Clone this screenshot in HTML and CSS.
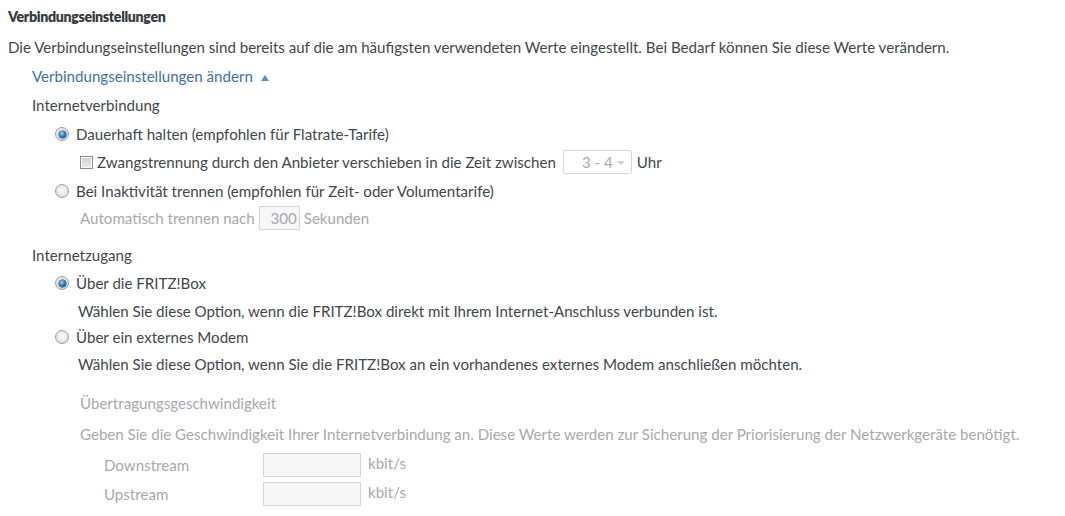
FILE: index.html
```html
<!DOCTYPE html>
<html lang="de">
<head>
<meta charset="utf-8">
<title>Verbindungseinstellungen</title>
<link rel="stylesheet" href="styles.css">
</head>
<body>
<div class="page">
  <h2 class="title">Verbindungseinstellungen</h2>
  <p class="intro">Die Verbindungseinstellungen sind bereits auf die am häufigsten verwendeten Werte eingestellt. Bei Bedarf können Sie diese Werte verändern.</p>
  <div class="link-row"><a class="link">Verbindungseinstellungen ändern</a><span class="tri"></span></div>

  <div class="section">
    <div class="sec-title r-inet">Internetverbindung</div>
    <div class="opt r-opt1"><span class="radio checked"></span><span>Dauerhaft halten (empfohlen für Flatrate-Tarife)</span></div>
    <div class="sub r-check"><span class="checkbox"></span><span>Zwangstrennung durch den Anbieter verschieben in die Zeit zwischen</span><span class="select">3 - 4<span class="caret"></span></span><span>Uhr</span></div>
    <div class="opt r-opt2"><span class="radio"></span><span>Bei Inaktivität trennen (empfohlen für Zeit- oder Volumentarife)</span></div>
    <div class="sub dis r-auto"><span>Automatisch trennen nach</span><span class="num">300</span><span>Sekunden</span></div>

    <div class="sec-title r-zug">Internetzugang</div>
    <div class="opt r-opt3"><span class="radio checked"></span><span>Über die FRITZ!Box</span></div>
    <div class="hint r-h1">Wählen Sie diese Option, wenn die FRITZ!Box direkt mit Ihrem Internet-Anschluss verbunden ist.</div>
    <div class="opt r-opt4"><span class="radio"></span><span>Über ein externes Modem</span></div>
    <div class="hint r-h2">Wählen Sie diese Option, wenn Sie die FRITZ!Box an ein vorhandenes externes Modem anschließen möchten.</div>

    <div class="speed dis">
      <div class="sp-title">Übertragungsgeschwindigkeit</div>
      <div class="sp-text">Geben Sie die Geschwindigkeit Ihrer Internetverbindung an. Diese Werte werden zur Sicherung der Priorisierung der Netzwerkgeräte benötigt.</div>
      <div class="sp-row"><span class="sp-label">Downstream</span><span class="box"></span><span class="unit">kbit/s</span></div>
      <div class="sp-row"><span class="sp-label">Upstream</span><span class="box"></span><span class="unit">kbit/s</span></div>
    </div>
  </div>
</div>
</body>
</html>
```

FILE: styles.css
```css
* { box-sizing: border-box; }
html, body { margin: 0; padding: 0; background: #fff; }
body {
  font-family: "Lato", "Open Sans", sans-serif;
  font-size: 15.1px;
  color: #3f464c;
}
.page { padding: 0 8px; }
.title {
  margin: 0;
  height: 32px;
  display: flex;
  align-items: center;
  font-size: 14.2px;
  letter-spacing: -0.35px;
  font-weight: 800;
  color: #353b40;
}
.intro {
  margin: 0;
  height: 30px;
  display: flex;
  align-items: center;
}
.link-row {
  height: 28px;
  display: flex;
  align-items: center;
  padding-left: 24px;
  gap: 8px;
}
.link { color: #3e6fa8; }
.tri {
  width: 0; height: 0;
  border-left: 4px solid transparent;
  border-right: 4px solid transparent;
  border-bottom: 6px solid #5a8fc8;
  margin-top: 4px;
}
.section { padding-left: 24px; }
.sec-title { display: flex; align-items: center; }
.r-inet { height: 30px; }
.opt { display: flex; align-items: center; gap: 7px; padding-left: 23px; }
.r-opt1 { height: 28px; }
.sub { display: flex; align-items: center; padding-left: 48px; }
.r-check { height: 28px; gap: 5px; }
.r-check .checkbox { margin-right: -1px; }
.r-opt2 { height: 30px; }
.r-auto { height: 24px; gap: 4px; }
.r-zug { height: 40px; padding-top: 10px; }
.r-opt3 { height: 26px; }
.hint { display: flex; align-items: center; padding-left: 46px; }
.r-h1 { height: 30px; }
.r-opt4 { height: 22px; }
.r-h2 { height: 32px; }

.radio {
  width: 14px; height: 14px;
  border-radius: 50%;
  border: 1px solid #a0a0a0;
  background: radial-gradient(circle at 50% 45%, #fbfbfb 0%, #ececec 45%, #c8c8c8 100%);
  position: relative;
  flex: none;
}
.radio.checked::after {
  content: "";
  position: absolute;
  left: 2.5px; top: 2.5px;
  width: 7px; height: 7px;
  border-radius: 50%;
  background: radial-gradient(circle at 40% 35%, #9fd8ff 0%, #2a80c8 45%, #0b3566 100%);
  box-shadow: 0 0 0 0.5px #17324f;
}
.checkbox {
  width: 13px; height: 13px;
  border: 1px solid #8d8d8d;
  background: linear-gradient(#cfcfcf, #ececec);
  box-shadow: inset 0 0 0 1px #fafafa;
  flex: none;
}
.select {
  margin-left: 2px;
  width: 69px; height: 24px;
  border: 1px solid #d6d6d6;
  border-radius: 2px;
  color: #a8a8a8;
  display: flex;
  align-items: center;
  justify-content: flex-end;
  padding-right: 18px;
  position: relative;
}
.caret {
  position: absolute;
  right: 6px; top: 10px;
  width: 0; height: 0;
  border-left: 4px solid transparent;
  border-right: 4px solid transparent;
  border-top: 4px solid #cfcfcf;
}
.dis { color: #a6a9ac; }
.num {
  width: 41px; height: 24px;
  border: 1px solid #d6d6d6;
  background: #f7f7f7;
  display: flex;
  align-items: center;
  justify-content: flex-end;
  padding-right: 2px;
  color: #a6a9ac;
}
.speed { padding-left: 48px; padding-top: 8px; }
.sp-title { height: 30px; display: flex; align-items: center; }
.sp-text { height: 32px; display: flex; align-items: center; }
.sp-row { display: flex; align-items: center; height: 29px; }
.sp-label { width: 183px; padding-left: 24px; }
.box {
  width: 98px; height: 24px;
  border: 1px solid #d6d6d6;
  background: #f7f7f7;
}
.unit { margin-left: 7px; margin-top: -4px; }
```
